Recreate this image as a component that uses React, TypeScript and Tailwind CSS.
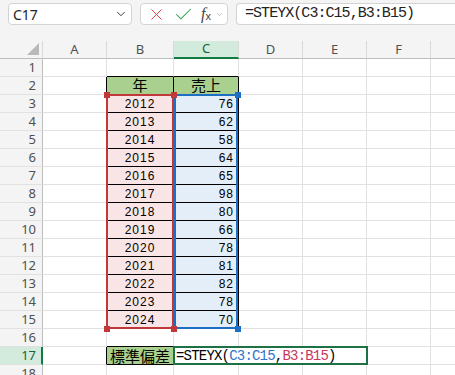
import React from "react";
import { ChevronDown, X, Check } from "lucide-react";

const COLS = ["A", "B", "C", "D", "E", "F", "G"];
const YEARS = [2012, 2013, 2014, 2015, 2016, 2017, 2018, 2019, 2020, 2021, 2022, 2023, 2024];
const SALES = [76, 62, 58, 64, 65, 98, 80, 66, 78, 81, 82, 78, 70];
const ROWS = Array.from({ length: 18 }, (_, i) => i + 1);

// which gridlines are the black table borders
const rightBlack = (r: number, c: string) =>
  (["A", "B", "C"].includes(c) && r >= 2 && r <= 15) || (["A", "B"].includes(c) && r === 17);
const bottomBlack = (r: number, c: string) =>
  (["B", "C"].includes(c) && r >= 1 && r <= 15) || (c === "B" && (r === 16 || r === 17));

const cellBg = (r: number, c: string) => {
  if ((r === 2 && (c === "B" || c === "C")) || (r === 17 && c === "B")) return "bg-[#a9d08e]";
  if (r >= 3 && r <= 15 && c === "B") return "bg-[#f9e5e5]";
  if (r >= 3 && r <= 15 && c === "C") return "bg-[#e4eef9]";
  return "bg-white";
};

const CellText: React.FC<{ r: number; c: string }> = ({ r, c }) => {
  if (r === 2 && c === "B") return <span className="w-full text-center text-[15px] font-['Noto_Sans_CJK_JP',sans-serif]">年</span>;
  if (r === 2 && c === "C") return <span className="w-full text-center text-[15px] font-['Noto_Sans_CJK_JP',sans-serif]">売上</span>;
  if (r >= 3 && r <= 15 && c === "B")
    return <span className="w-full text-center text-[12px] tracking-[1px] font-['Liberation_Sans',sans-serif]">{YEARS[r - 3]}</span>;
  if (r >= 3 && r <= 15 && c === "C")
    return <span className="w-full text-right pr-[4px] text-[12px] tracking-[1px] font-['Liberation_Sans',sans-serif]">{SALES[r - 3]}</span>;
  if (r === 17 && c === "B")
    return <span className="w-full text-center text-[15px] font-['Noto_Sans_CJK_JP',sans-serif] leading-none">標準偏差</span>;
  return null;
};

const Cell: React.FC<{ r: number; c: string }> = ({ r, c }) => (
  <div
    className={`flex items-center border-r border-b text-black ${cellBg(r, c)} ${
      rightBlack(r, c) ? "border-r-black" : "border-r-[#e1e1e1]"
    } ${bottomBlack(r, c) ? "border-b-black" : "border-b-[#e1e1e1]"}`}
  >
    <CellText r={r} c={c} />
  </div>
);

const Toolbar: React.FC = () => (
  <div className="flex h-[41px] items-start gap-[8px] bg-[#f4f4f4] pl-[8px] pt-[3px]">
    {/* name box */}
    <div className="flex h-[22px] w-[124px] shrink-0 items-center justify-between rounded-[4px] border border-[#d4d4d4] bg-white pl-[4px] pr-[3px]">
      <span className="text-[14px] text-[#222] font-['Noto_Sans',sans-serif]">C17</span>
      <ChevronDown size={14} strokeWidth={1.6} className="text-[#333]" />
    </div>
    {/* cancel / enter / fx */}
    <div className="flex h-[22px] w-[88px] shrink-0 items-center rounded-[4px] border border-[#d4d4d4] bg-white pl-[6px]">
      <X size={19} strokeWidth={1.2} className="text-[#e0383d]" />
      <Check size={21} strokeWidth={1.2} className="ml-[7px] text-[#2ea44f]" />
      <span className="ml-[7px] flex items-end text-[#444] font-['Liberation_Serif',serif] italic leading-none">
        <span className="text-[16px]">f</span>
        <span className="text-[11px] not-italic font-['Liberation_Sans',sans-serif]">x</span>
      </span>
      <ChevronDown size={9} strokeWidth={1.5} className="ml-[4px] text-[#999]" />
    </div>
    {/* formula bar */}
    <div className="flex h-[22px] flex-1 items-center rounded-l-[4px] border border-r-0 border-[#d4d4d4] bg-white pl-[8px]">
      <span className="whitespace-nowrap text-[15px] tracking-[-0.95px] text-[#222] font-['Liberation_Mono',monospace]">
        =STEYX(C3:C15,B3:B15)
      </span>
    </div>
  </div>
);

export default function App() {
  return (
    <div className="h-[375px] w-[455px] overflow-hidden bg-white">
      <Toolbar />
      <div className="relative grid w-[495px] grid-cols-[43px_64px_67px_65px_64px_64px_64px_64px] auto-rows-[18px]">
        {/* column headers */}
        <div className="relative border-r border-b border-r-[#d9d9d9] border-b-[#bdbdbd] bg-[#f4f4f4]">
          <svg className="absolute bottom-[3px] right-[3px]" width="12" height="12" viewBox="0 0 12 12">
            <polygon points="12,0 12,12 0,12" fill="#b9b9b9" />
          </svg>
        </div>
        {COLS.map((c) =>
          c === "C" ? (
            <div
              key={c}
              className="flex items-center justify-center border-r border-b-2 border-r-[#d9d9d9] border-b-[#107c41] bg-[#d3ebdc] text-[13px] text-[#17623a] font-['Noto_Sans',sans-serif]"
            >
              {c}
            </div>
          ) : (
            <div
              key={c}
              className="flex items-center justify-center border-r border-b border-r-[#d9d9d9] border-b-[#bdbdbd] bg-[#f4f4f4] text-[13px] text-[#505050] font-['Noto_Sans',sans-serif]"
            >
              {c === "G" ? null : c}
            </div>
          )
        )}

        {ROWS.map((r) => (
          <React.Fragment key={r}>
            {r === 17 ? (
              <div className="flex items-center justify-end border-r-2 border-b border-r-[#107c41] border-b-[#e1e1e1] bg-[#d3ebdc] pr-[5px] text-[13px] text-[#17623a] font-['Noto_Sans',sans-serif]">
                {r}
              </div>
            ) : (
              <div className="flex items-center justify-end border-r border-b border-r-[#bdbdbd] border-b-[#e1e1e1] bg-[#f4f4f4] pr-[6px] text-[13px] text-[#505050] font-['Noto_Sans',sans-serif]">
                {r}
              </div>
            )}
            {r === 17 ? (
              <>
                <Cell r={r} c="A" />
                <Cell r={r} c="B" />
                {/* cell in edit mode, overflowing into D and E */}
                <div className="relative col-span-3 border-b border-b-[#e1e1e1] bg-white">
                  <div className="absolute -top-px -left-px -right-px -bottom-px flex items-center border-2 border-[#1e7145] pl-[1px]">
                    <span className="text-[14px] tracking-[-0.8px] text-black font-['Liberation_Mono',monospace] leading-none">
                      =STEYX(<span className="text-[#2f74c8]">C3:C15</span>,<span className="text-[#c9375a]">B3:B15</span>)
                    </span>
                  </div>
                </div>
                <Cell r={r} c="F" />
                <Cell r={r} c="G" />
              </>
            ) : (
              COLS.map((c) => <Cell key={c} r={r} c={c} />)
            )}
          </React.Fragment>
        ))}

        {/* range highlight for C3:C15 */}
        <div className="pointer-events-none absolute left-[174px] top-[53px] h-[235px] w-[64px] border-2 border-[#1d6fc3]" />
        <div className="absolute left-[235px] top-[51px] h-[6px] w-[6px] bg-[#1d6fc3]" />
        <div className="absolute left-[235px] top-[285px] h-[6px] w-[6px] bg-[#1d6fc3]" />
        {/* range highlight for B3:B15 */}
        <div className="pointer-events-none absolute left-[106px] top-[53px] h-[235px] w-[68px] border-2 border-[#c1383b]" />
        <div className="absolute left-[104px] top-[51px] h-[6px] w-[6px] bg-[#c1383b]" />
        <div className="absolute left-[171px] top-[51px] h-[6px] w-[6px] bg-[#c1383b]" />
        <div className="absolute left-[104px] top-[285px] h-[6px] w-[6px] bg-[#c1383b]" />
        <div className="absolute left-[171px] top-[285px] h-[6px] w-[6px] bg-[#c1383b]" />
      </div>
    </div>
  );
}
